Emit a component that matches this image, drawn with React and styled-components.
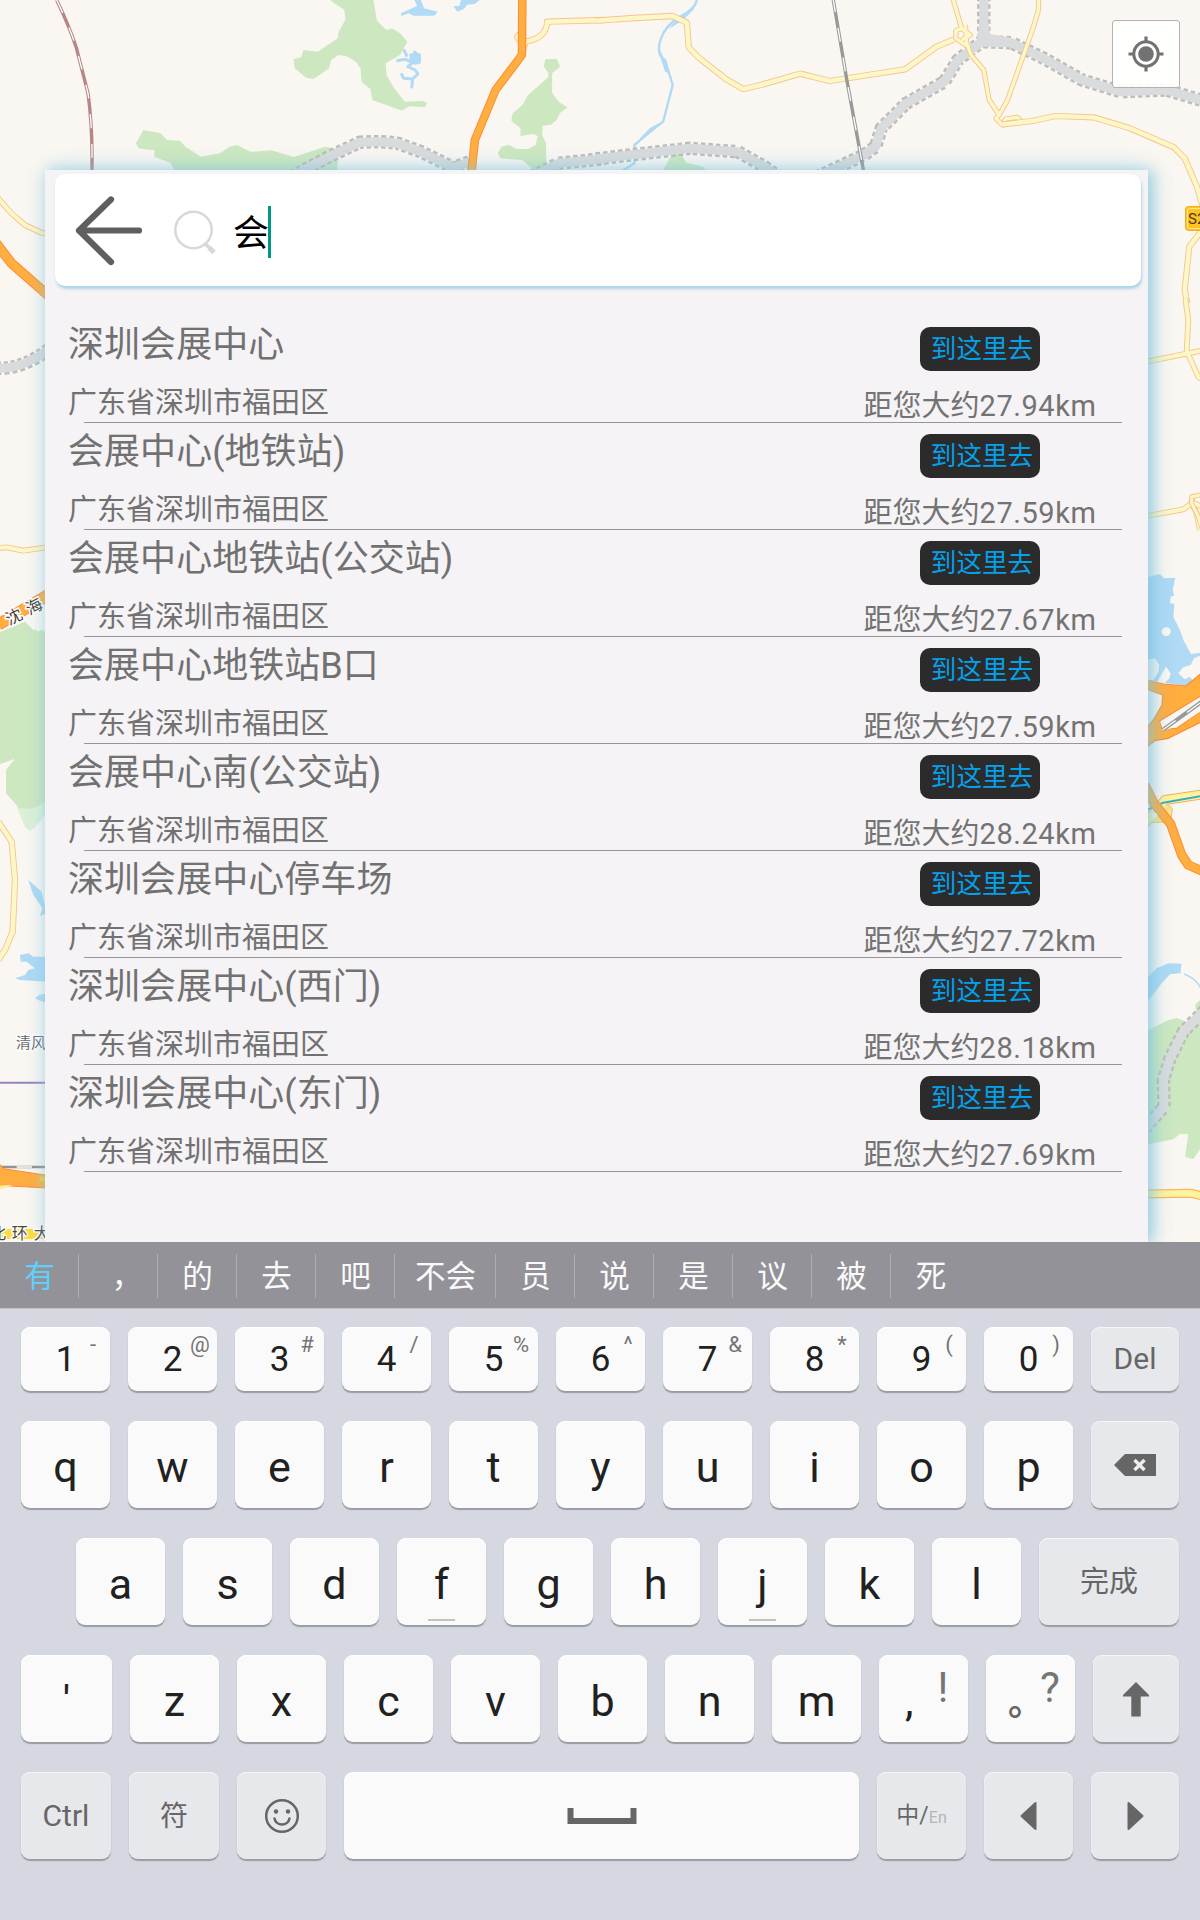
import React from "react";
import styled, { createGlobalStyle, css } from "styled-components";

const Global = createGlobalStyle`
  html, body { margin: 0; padding: 0; }
  * { box-sizing: border-box; }
  body { font-family: Roboto, "Noto Sans CJK SC", sans-serif; }
`;

const Screen = styled.div`
  width: 1200px;
  height: 1920px;
  display: flex;
  flex-direction: column;
  overflow: hidden;
  background: #d5d8e0;
`;

/* ---------- map ---------- */

const Stage = styled.main`
  position: relative;
  height: 1242px;
  flex: none;
  display: flex;
  padding: 170px 52px 0 45px;
  overflow: hidden;
  background: #faf7f2;
`;

const MapCanvas = styled.svg`
  position: absolute;
  inset: 0;
  path, polyline { vector-effect: non-scaling-stroke; fill: none; stroke-linejoin: round; }
  .land { fill: #cde8c0; }
  .lawn { fill: #dcf1d6; }
  .water { fill: #b0daf5; }
  .paper { fill: #faf7f2; }
  text { font-family: Roboto, "Noto Sans CJK SC", sans-serif; }
`;

const LocateButton = styled.button`
  position: absolute;
  top: 20px;
  right: 20px;
  width: 68px;
  height: 68px;
  padding: 0 1px 0 0;
  display: flex;
  align-items: center;
  justify-content: center;
  border: 1.5px solid #b3b2b0;
  border-radius: 3px;
  background: rgba(255, 255, 255, 0.9);
`;

const Road = ({ d, w = 5 }) => (
  <>
    <path d={d} stroke="#f6c48f" strokeWidth={w + 1.8} />
    <path d={d} stroke="#fcf7c6" strokeWidth={w} />
  </>
);
const Trunk = ({ d, w = 7 }) => (
  <>
    <path d={d} stroke="#ff8b32" strokeWidth={w + 2} />
    <path d={d} stroke="#ffae40" strokeWidth={w} />
  </>
);
const Planned = ({ d }) => (
  <>
    <path d={d} stroke="#bdbdbe" strokeWidth="13.5" strokeDasharray="4.500 3" />
    <path d={d} stroke="#d9dbdc" strokeWidth="9" />
  </>
);
const Rail = ({ d, color = "#999" }) => (
  <>
    <path d={d} stroke={color} strokeWidth="3.4" />
    <path d={d} stroke="#fff" strokeWidth="1.3" strokeDasharray="14 16" />
  </>
);

function CityMap() {
  return (
    <MapCanvas width="1200" height="1242" viewBox="0 0 1200 1242">
      <g transform="scale(.38265 .33333)">
        <path className="land" d="M862 0L900 30 903 58 885 95 883 115 830 155 793 150 787 172 767 178 770 205 800 233 820 237 860 205 865 180 885 165 905 168 930 185 942 205 945 245 968 268 973 300 1050 332 1070 319 1110 322 1117 310 1105 303 1058 305 1030 265 1010 225 1008 190 1045 165 1065 125 1045 100 1025 85 1010 90 985 62 976 0Z" />
        <path className="land" d="M375 390L355 430 362 445 385 449 404 450 403 470 445 488 460 520 880 520 883 485 875 445 850 440 768 471 708 451 655 456 620 435 600 440 575 460 525 470 485 440 470 422 437 420 420 400Z" />
        <path className="land" d="M1425 178L1455 176 1464 200 1443 220 1443 278 1460 305 1483 322 1463 340 1455 360 1440 374 1418 378 1417 405 1427 430 1428 490 1400 515 1365 480 1308 475 1301 460 1310 440 1330 434 1350 447 1380 447 1400 435 1405 408 1395 402 1360 408 1360 385 1336 362 1340 340 1365 315 1380 285 1433 232 1433 218 1421 200Z" />
        <path className="water" d="M1083 0L1090 18 1048 40 1048 48 1068 40 1080 47 1135 47 1144 35 1108 25 1100 0ZM1205 0L1200 18 1185 18 1195 35 1212 27 1220 14 1240 12 1254 0Z" />
        <path d="M1055 148L1064 170M1036 182L1060 178 1078 188 1095 188 1095 165 1080 155M1078 188L1066 200 1085 210 1092 222 1078 237 1055 235 1048 220M1078 237L1076 265" stroke="#b0daf5" strokeWidth="3" />
        <path className="water" d="M1070 160L1100 162 1100 185 1085 195 1070 182Z" />
        <Rail d="M148 0Q180 75 200 145L230 280Q243 390 240 520" color="#b88688" />
        <Planned d="M745 540L860 470 940 427Q1000 422 1040 430L1100 455 1185 503 1240 480" />
        <Planned d="M1390 530L1460 490 1580 476" />
        <Road d="M1365 100Q1340 108 1363 125L1385 122Q1428 110 1430 65L1580 60M1365 155L1375 122" w={4.5} />
        <Trunk d="M1365 0L1364 165 1295 270 1241 420 1231 530" w={6.5} />
        <Road d="M-10 588L30 640 65 675 110 699 130 699" w={4} />
        <Trunk d="M-10 730L30 790 130 890" w={8} />
      </g>

      <g transform="translate(600 0) scale(.38265 .33333)">
        <path className="land" d="M160 520L190 460 212 460 225 488 270 500 280 520Z" />
        <path d="M253 0Q250 25 210 50T158 120T170 180L190 255 173 330 165 365 110 415 90 435 90 490 55 515" stroke="#b0daf5" strokeWidth="2.4" />
        <path className="water" d="M158 150L180 220 170 215 160 180ZM232 30L248 25 215 62 178 88 200 60ZM165 362L110 420 105 414 130 385Z" />
        <Planned d="M-10 477L100 462 235 445 360 455 430 500 480 540" />
        <Planned d="M550 540L690 465 720 440 735 385 800 310 900 245 935 180 1003 120" />
        <Planned d="M1003 -10L1003 125 1075 128 1160 175 1260 240 1360 275 1480 270 1600 310" />
        <path d="M991 70L1015 70 1020 102 1075 114 1075 142 1000 140 950 180 930 172 985 120Z" style={{ fill: "#d9dbdc" }} />
        <Road d="M-10 62L90 54 190 48 227 68 232 142 260 175 330 238 374 267 420 255 523 221 600 243 797 208 880 140 925 118" w={4.5} />
        <Road d="M922 -5L945 85 930 92 930 115 965 142M945 85L968 105 945 120M955 75L958 130 970 165 1003 210 1017 300 1043 345 1065 300 1130 90 1146 30 1146 -5M1043 345L1035 355 1052 375 1060 357 1090 352 1100 362" w={3.4} />
        <Road d="M1052 373L1130 363 1190 348 1290 352 1385 385 1500 442 1528 475 1560 560 1580 640M1580 680L1540 740 1528 870 1535 910" w={4.4} />
        <Rail d="M609 -5L645 240 690 520" />
      </g>
      <g>
        <rect x="1185.500" y="206.500" width="40" height="24" rx="3" fill="#ffc21f" stroke="#f3b01d" />
        <rect x="1187.500" y="208.500" width="40" height="20" rx="2" fill="none" stroke="#ffe7a0" />
        <text x="1188" y="224" fontSize="15" fill="#4a3a20">S2</text>
      </g>

      <g transform="translate(0 300) scale(.33333)">
        <Planned d="M-10 205Q70 208 150 145" />
        <Road d="M-5 744L20 742 70 752 140 742" w={4} />
        <path className="land" d="M-5 998L75 965 100 990 115 985 145 1000 145 1445 -5 1445Z" />
        <path className="paper" d="M75 965L100 950 120 965 130 960 128 985 115 995ZM-5 1395L40 1378 66 1385 55 1445 -5 1445Z" />
        <Trunk d="M-5 974L150 882" w={10} />
        <g transform="rotate(-27 72 935)" fontSize="49" fill="#4c4036" stroke="#fff" strokeWidth="9" paintOrder="stroke">
          <text x="14" y="952">沈</text>
          <text x="82" y="952">海</text>
        </g>
      </g>

      <g transform="translate(0 780) scale(.33333)">
        <path className="paper" d="M-5 -45L45 -60 20 0 20 45 -5 60Z" />
        <path className="lawn" d="M50 80L75 140 90 152 105 142 140 100 140 60Z" />
        <path className="land" d="M18 -30L18 40 58 85 95 86 140 65 140 -70 50 -70Z" />
        <path className="water" d="M85 300L125 335 140 400 120 408 127 385 100 345ZM60 525L85 520 100 530 140 530 140 605 60 600 45 595 75 585 85 570 105 565 80 545 62 545ZM118 645L140 640 140 668 120 662 105 655Z" />
        <Road d="M-5 125L35 185 45 300 38 455 15 510 -5 540" w={4.6} />
        <path d="M0 908H140" stroke="#9682c4" strokeWidth="2" />
        <path d="M0 1161H140" stroke="#929292" strokeWidth="2.500" />
        <path d="M50 1161H96" stroke="#fff" strokeWidth="1.500" />
        <path d="M-5 1148L10 1166 140 1186 140 1224 -5 1216Z" style={{ fill: "#ffad3f" }} stroke="#ff8b32" strokeWidth="1" />
        <path d="M118 1190H140V1204H118Z" style={{ fill: "#f0cf3b" }} />
        <path d="M-5 1217L38 1215 -5 1232Z" style={{ fill: "#fdf09e" }} />
        <path d="M0 1362H140" stroke="#ffdc3c" strokeWidth="10" />
        <g fill="#4a4440" stroke="#fff" strokeWidth="8" paintOrder="stroke">
          <text x="48" y="804" fontSize="45" fill="#6b6b6b">清风</text>
          <text x="-30" y="1378" fontSize="48">北</text>
          <text x="35" y="1378" fontSize="48">环</text>
          <text x="101" y="1378" fontSize="48">大</text>
        </g>
      </g>

      <g transform="translate(800 300) scale(.33333)">
        <Road d="M1156 -5L1165 60 1160 155 1170 175 1195 230 1215 245M1040 185L1165 160 1215 150M1040 648L1150 628 1178 608 1210 622M1180 585L1174 605 1190 640 1200 690" w={4} />
        <Road d="M1215 582L1175 590 1175 610 1195 650 1210 700" w={3} />
        <path className="water" d="M1035 833L1080 822 1092 835 1126 833 1118 870 1125 895 1120 950 1140 990 1150 1020 1173 1062 1205 1058 1205 1130 1165 1160 1120 1152 1035 1140Z" />
        <path className="paper" d="M1098 982A14 13 0 1 0 1099 982ZM1205 1065L1182 1075 1172 1095 1150 1102 1135 1120 1155 1138 1170 1130 1180 1145 1205 1130ZM1098 1100L1112 1120 1108 1135 1095 1148 1072 1145ZM1035 1080L1065 1075 1078 1095 1075 1115 1060 1140 1035 1140ZM1126 885L1112 890 1110 910 1126 912Z" />
        <path d="M1035 1140L1090 1152 1158 1158 1215 1110 1215 1180 1080 1262 1085 1285 1130 1285 1215 1225 1215 1260 1105 1315 1065 1322 1035 1345 1035 1290 1060 1260 1086 1215 1088 1185 1035 1165Z" style={{ fill: "#ffae3e" }} stroke="#ff8b32" strokeWidth="1.200" />
        <path className="paper" d="M1080 1265L1215 1185 1215 1225 1130 1282 1090 1290Z" />
        <path d="M1088 1290L1215 1198" stroke="#999" strokeWidth="4" />
        <path d="M1088 1290L1215 1198" stroke="#fff" strokeWidth="1.200" strokeDasharray="16 14" />
      </g>

      <g transform="translate(800 780) scale(.33333)">
        <path d="M1035 130L1095 60 1215 42" stroke="#efb155" strokeWidth="10" />
        <path d="M1035 115L1100 115 1105 90 1080 75" stroke="#f4c261" strokeWidth="9" />
        <path d="M1035 115L1100 115 1105 90 1080 75" stroke="#fae58f" strokeWidth="7" />
        <path d="M1035 130L1095 60 1215 42" stroke="#fff3a0" strokeWidth="8" />
        <path d="M1035 92L1090 68 1215 46" stroke="#39abc4" strokeWidth="2" />
        <Trunk d="M1035 15L1062 70 1112 132 1145 225 1165 255 1215 277" w={7.500} />
        <path className="paper" d="M1063 99A9 7 0 1 0 1064 99Z" />
        <path className="water" d="M1035 600L1070 565 1105 550 1144 551 1142 580 1110 583 1085 610 1035 675ZM1035 925L1062 945 1062 965 1035 965Z" />
        <path d="M1152 582Q1190 595 1205 630" stroke="#b0daf5" strokeWidth="1.500" />
        <path className="land" d="M1035 755L1100 722 1130 714 1170 730 1190 700 1185 675 1205 655 1205 1100 1180 1138 1155 1130 1165 1062 1140 1062 1120 1078 1035 1095Z" />
        <Planned d="M1215 690L1150 755 1110 835 1090 900 1092 980 1035 1045" />
        <path d="M1035 1242L1175 1240 1215 1250" stroke="#fbb55c" strokeWidth="9" />
        <path d="M1035 1242L1175 1240 1215 1250" stroke="#fff39f" strokeWidth="6.500" />
      </g>
    </MapCanvas>
  );
}

/* ---------- search panel ---------- */

const Panel = styled.section`
  position: relative;
  flex: 1;
  padding-top: 4px;
  background: #f5f3f5;
  box-shadow: 4px 1px 14px rgba(120, 190, 218, 0.65), 2px 0 22px rgba(130, 198, 222, 0.45);
`;

const SearchBar = styled.header`
  height: 112px;
  margin: 0 7px 0 10px;
  padding-left: 18px;
  display: flex;
  align-items: center;
  border-radius: 10px;
  background: #fff;
  box-shadow: 1px 3px 3px #aed4e5;
`;

const SearchIcon = styled.svg`
  margin-left: 26px;
`;

const Query = styled.div`
  margin-left: 16px;
  height: 52px;
  line-height: 52px;
  padding-top: 4px;
  font-size: 36px;
  color: #000;
`;

const Caret = styled.div`
  width: 3px;
  height: 52px;
  margin: 3px 0 0 -1px;
  background: #009688;
`;

const ResultList = styled.ul`
  list-style: none;
  margin: 30px 0 0;
  padding: 0;
`;

const Result = styled.li`
  height: 107px;
  display: grid;
  grid-template: 106px 1px / 1fr 240px;
  padding: 0 48px 0 23px;
`;

const Place = styled.div`
  padding-top: 7px;
`;

const PlaceName = styled.div`
  height: 44px;
  line-height: 44px;
  font-size: 36px;
  letter-spacing: 0.05px;
  color: #717171;
`;

const Address = styled.div`
  margin-top: 18px;
  line-height: 36px;
  font-size: 29px;
  color: #717171;
`;

const Actions = styled.div`
  display: flex;
  flex-direction: column;
  align-items: center;
  padding-top: 11px;
`;

const GoButton = styled.button`
  width: 120px;
  height: 44px;
  padding: 1px 0 0 4px;
  border: 0;
  border-radius: 10px;
  background: #2b2b2b;
  color: #04a0ea;
  font: 25.600px/43px Roboto, "Noto Sans CJK SC", sans-serif;
  white-space: nowrap;
`;

const Distance = styled.div`
  margin-top: 20px;
  line-height: 31px;
  font-size: 29px;
  color: #737373;
  white-space: nowrap;
  span { letter-spacing: 0.55px; }
`;

const Rule = styled.div`
  grid-column: 1 / -1;
  margin: 0 -22px 0 16px;
  background: #96959a;
`;

const places = [
  ["深圳会展中心", "27.94"],
  ["会展中心(地铁站)", "27.59"],
  ["会展中心地铁站(公交站)", "27.67"],
  ["会展中心地铁站B口", "27.59"],
  ["会展中心南(公交站)", "28.24"],
  ["深圳会展中心停车场", "27.72"],
  ["深圳会展中心(西门)", "28.18"],
  ["深圳会展中心(东门)", "27.69"],
];

/* ---------- keyboard ---------- */

const Candidates = styled.div`
  height: 67px;
  flex: none;
  display: flex;
  padding-top: 12px;
  background: #939298;
  border-bottom: 1px solid #c3c3c6;
`;

const Candidate = styled.div`
  width: ${(p) => (p.$wide ? 101 : 79)}px;
  height: 44px;
  line-height: 46px;
  padding-left: ${(p) => (p.$comma ? 18 : 1)}px;
  text-align: center;
  font-size: 30.500px;
  color: ${(p) => (p.$active ? "#5fd0fb" : "#fafafa")};
  border-right: 1px solid #aeadb2;
  &:last-child { border-right: 0; }
`;

const Keys = styled.div`
  flex: 1;
  padding: 18px 0 0 21px;
  display: flex;
  flex-direction: column;
  gap: 30px;
`;

const KeyRow = styled.div`
  display: flex;
  gap: 18px;
  height: ${(p) => (p.$short ? 64 : 87)}px;
  padding-left: ${(p) => p.$indent || 0}px;
`;

const Key = styled.div`
  position: relative;
  flex: none;
  width: ${(p) => p.$w || 89}px;
  display: flex;
  align-items: center;
  justify-content: ${(p) => (p.$start ? "flex-start" : "center")};
  border-radius: 9px;
  background: #fafafa;
  color: #212121;
  font-size: ${(p) => p.$size || 43}px;
  line-height: 1;
  padding-top: ${(p) => p.$drop ?? 6}px;
  padding-left: ${(p) => p.$start || 0}px;
  box-shadow: inset 0 1px 0 #fff, 0 2px 1px #9a9ca2;
  ${(p) =>
    p.$fn &&
    css`
      background: #e6e8ec;
      color: #666;
      box-shadow: inset 0 1px 0 #f4f5f6, inset 1px 0 0 #ebecef, 0 2px 1px #9a9ca2;
    `}
`;

const Hint = styled.span`
  position: absolute;
  top: 7px;
  left: 52px;
  width: 40px;
  text-align: center;
  font-size: 22px;
  line-height: 1;
  color: #757575;
  ${(p) =>
    p.$big &&
    css`
      top: 12px;
      left: 44px;
      font-size: 42px;
    `}
`;

const HomeMark = styled.i`
  position: absolute;
  left: 31px;
  bottom: 4px;
  width: 27px;
  height: 2px;
  background: #c2c2c2;
`;

const FullStop = styled.span`
  width: 18px;
  margin-top: 2px;
  font-size: 36px;
  font-weight: 700;
  color: #666;
`;

const Lang = styled.div`
  display: flex;
  align-items: baseline;
  font-size: 23px;
  small { font-size: 16px; color: #b5b6ba; }
`;

const digits = [["1", "-"], ["2", "@"], ["3", "#"], ["4", "/"], ["5", "%"], ["6", "^"], ["7", "&"], ["8", "*"], ["9", "("], ["0", ")"]];
const words = ["有", "，", "的", "去", "吧", "不会", "员", "说", "是", "议", "被", "死"];

export default function App() {
  return (
    <Screen>
      <Global />
      <Stage>
        <CityMap />
        <LocateButton aria-label="定位">
          <svg width="40" height="40" viewBox="-20 -20 40 40" fill="none" stroke="#727272">
            <circle r="7.800" fill="#727272" stroke="none" />
            <circle r="12.200" strokeWidth="3" />
            <path d="M0-17.500V-12M0 12V17.500M-17.500 0H-12M12 0H17.500" strokeWidth="3.200" />
          </svg>
        </LocateButton>
        <Panel>
          <SearchBar>
            <svg width="74" height="76" viewBox="0 0 74 76" fill="none" stroke="#5f5f5f" strokeWidth="6.200" strokeLinecap="round" strokeLinejoin="round">
              <path d="M38 7.500L6 38.500 38 70M6 38.500H66" />
            </svg>
            <SearchIcon width="44" height="52" viewBox="0 0 44 52" fill="none" stroke="#d8d8d8" strokeLinecap="round">
              <circle cx="20.500" cy="26" r="18.200" strokeWidth="2.500" />
              <path d="M32.500 40L35 42.500" strokeWidth="3.500" />
              <path d="M36 43.500L41 48.500" strokeWidth="5" strokeLinecap="butt" />
            </SearchIcon>
            <Query>会</Query>
            <Caret />
          </SearchBar>
          <ResultList>
            {places.map(([name, km]) => (
              <Result key={name}>
                <Place>
                  <PlaceName>{name}</PlaceName>
                  <Address>广东省深圳市福田区</Address>
                </Place>
                <Actions>
                  <GoButton>到这里去</GoButton>
                  <Distance>距您大约<span>{km}km</span></Distance>
                </Actions>
                <Rule />
              </Result>
            ))}
          </ResultList>
        </Panel>
      </Stage>

      <Candidates>
        {words.map((w, i) => (
          <Candidate key={w} $active={i === 0} $wide={w.length > 1} $comma={i === 1}>{w}</Candidate>
        ))}
      </Candidates>

      <Keys>
        <KeyRow $short>
          {digits.map(([n, h]) => (
            <Key key={n} $size={35} $drop={1}>{n}<Hint>{h}</Hint></Key>
          ))}
          <Key $fn $w={88} $size={30} $drop={0}>Del</Key>
        </KeyRow>
        <KeyRow>
          {[..."qwertyuiop"].map((c) => <Key key={c}>{c}</Key>)}
          <Key $fn $w={88} $drop={0}>
            <svg width="42" height="22" viewBox="0 0 42 22">
              <path d="M0 11L11 0H42V22H11Z" fill="#666" />
              <path d="M20.500 6L30.500 16M30.500 6L20.500 16" stroke="#eceef0" strokeWidth="3.400" />
            </svg>
          </Key>
        </KeyRow>
        <KeyRow $indent={55}>
          {[..."asdfghjkl"].map((c) => (
            <Key key={c}>{c}{(c === "f" || c === "j") && <HomeMark />}</Key>
          ))}
          <Key $fn $w={140} $size={29} $drop={2}>完成</Key>
        </KeyRow>
        <KeyRow>
          <Key $w={91}>'</Key>
          {[..."zxcvbnm"].map((c) => <Key key={c}>{c}</Key>)}
          <Key $start={26}>,<Hint $big>!</Hint></Key>
          <Key $start={22}><FullStop>。</FullStop><Hint $big>?</Hint></Key>
          <Key $fn $w={86} $drop={1}>
            <svg width="28" height="36" viewBox="0 0 28 36" fill="#666">
              <path d="M14 1L27 14V15.500H18.700V35.500H9.300V15.500H1V14Z" />
            </svg>
          </Key>
        </KeyRow>
        <KeyRow>
          <Key $fn $w={90} $size={30} $drop={1}>Ctrl</Key>
          <Key $fn $w={90} $size={28} $drop={2}>符</Key>
          <Key $fn $drop={0}>
            <svg width="36" height="36" viewBox="-18 -18 36 36" fill="none" stroke="#666" strokeWidth="2.500">
              <circle r="15.800" />
              <circle cx="-6" cy="-4.500" r="2.200" fill="#666" stroke="none" />
              <circle cx="6" cy="-4.500" r="2.200" fill="#666" stroke="none" />
              <path d="M-7.500 2.500A7.600 7.200 0 0 0 7.500 2.500" strokeLinecap="round" />
            </svg>
          </Key>
          <Key $w={515} $drop={0}>
            <svg width="70" height="18" viewBox="0 0 70 18" fill="none" stroke="#666" strokeWidth="6">
              <path d="M3.500 1V14H66.500V1" />
            </svg>
          </Key>
          <Key $fn $drop={0}><Lang>中/<small>En</small></Lang></Key>
          <Key $fn $drop={0}>
            <svg width="18" height="34" viewBox="0 0 18 34">
              <path d="M1.500 17L15.500 4V30Z" fill="#666" stroke="#666" strokeWidth="2" strokeLinejoin="round" />
            </svg>
          </Key>
          <Key $fn $w={88} $drop={0}>
            <svg width="18" height="34" viewBox="0 0 18 34">
              <path d="M16.500 17L2.500 4V30Z" fill="#666" stroke="#666" strokeWidth="2" strokeLinejoin="round" />
            </svg>
          </Key>
        </KeyRow>
      </Keys>
    </Screen>
  );
}
